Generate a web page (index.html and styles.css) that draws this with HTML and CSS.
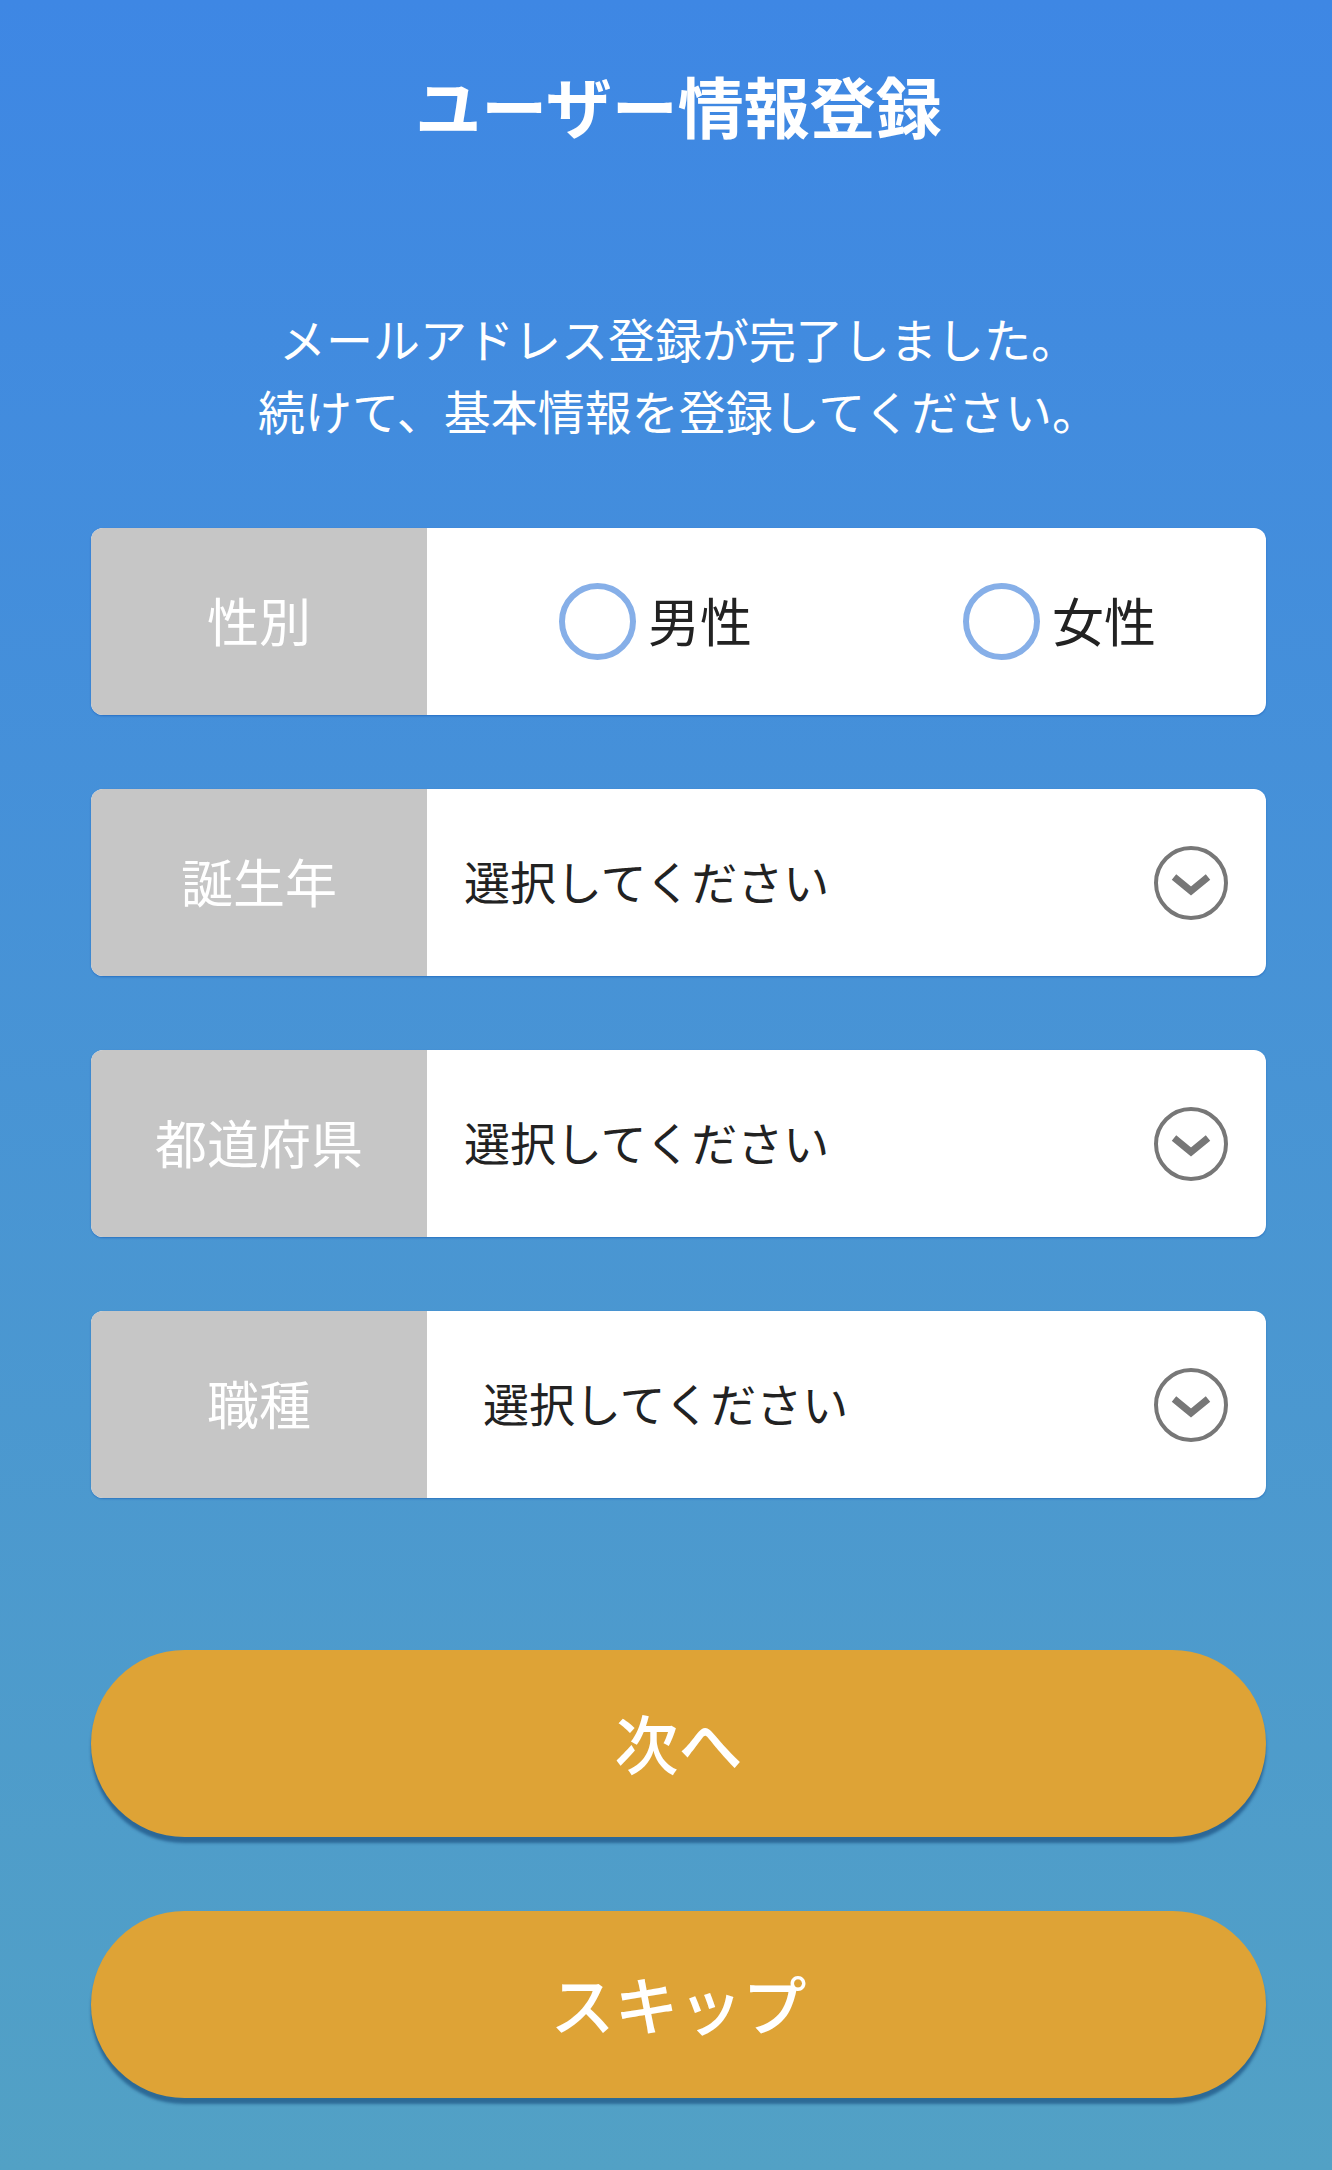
FILE: index.html
```html
<!DOCTYPE html>
<html lang="ja">
<head>
    <meta charset="UTF-8">
    <meta name="viewport" content="width=device-width, initial-scale=1.0">
    <title>ユーザー情報登録</title>

    <link rel="stylesheet" href="styles.css">
</head>
<body>

    <main class="page">
        <h1 class="title">ユーザー情報登録</h1>

        <p class="lead">
            メールアドレス登録が完了しました。<br>
            続けて、基本情報を登録してください。
        </p>

        <div class="field">
            <div class="field-label">性別</div>
            <div class="field-body radios">
                <label class="radio"><span class="radio-mark"></span>男性</label>
                <label class="radio"><span class="radio-mark"></span>女性</label>
            </div>
        </div>

        <div class="field">
            <div class="field-label">誕生年</div>
            <div class="field-body select">
                <span class="select-text">選択してください</span>
                <svg class="select-icon" width="76" height="76" viewBox="0 0 76 76">
                    <circle cx="38" cy="38" r="35" fill="none" stroke="#777" stroke-width="4"/>
                    <polyline points="21,32 38,46 55,32" fill="none" stroke="#777" stroke-width="7"/>
                </svg>
            </div>
        </div>

        <div class="field">
            <div class="field-label">都道府県</div>
            <div class="field-body select">
                <span class="select-text">選択してください</span>
                <svg class="select-icon" width="76" height="76" viewBox="0 0 76 76">
                    <circle cx="38" cy="38" r="35" fill="none" stroke="#777" stroke-width="4"/>
                    <polyline points="21,32 38,46 55,32" fill="none" stroke="#777" stroke-width="7"/>
                </svg>
            </div>
        </div>

        <div class="field">
            <div class="field-label">職種</div>
            <div class="field-body select select-wide">
                <span class="select-text">選択してください</span>
                <svg class="select-icon" width="76" height="76" viewBox="0 0 76 76">
                    <circle cx="38" cy="38" r="35" fill="none" stroke="#777" stroke-width="4"/>
                    <polyline points="21,32 38,46 55,32" fill="none" stroke="#777" stroke-width="7"/>
                </svg>
            </div>
        </div>

        <div class="actions">
            <button class="btn" type="button">次へ</button>
            <button class="btn" type="button">スキップ</button>
        </div>
    </main>

</body>
</html>
```

FILE: styles.css
```css
* {
    margin: 0;
    padding: 0;
    box-sizing: border-box;
}

body {
    min-height: 2170px;
    background: linear-gradient(to bottom, #3e87e4, #52a1c5);
    font-family: "Noto Sans CJK JP", "Noto Sans", sans-serif;
    color: #222;
}

.page {
    padding: 64px 66px 0 91px;
}

.title {
    color: white;
    text-align: center;
    font-size: 66px;
    font-weight: 600;
    line-height: 80px;
}

.lead {
    margin-top: 158px;
    color: white;
    text-align: center;
    font-size: 47px;
    line-height: 72px;
}

.field {
    display: flex;
    height: 187px;
    margin-top: 74px;
    border-radius: 12px;
    overflow: hidden;
    background-color: white;
    box-shadow: 0 1px 2px rgba(0, 70, 170, 0.45);
}

.lead + .field {
    margin-top: 82px;
}

.field-label {
    width: 336px;
    flex-shrink: 0;
    display: flex;
    align-items: center;
    justify-content: center;
    padding-bottom: 5px;
    background-color: #c6c6c6;
    color: white;
    font-size: 52px;
}

.field-body {
    flex: 1;
    display: flex;
    align-items: center;
}

.radios {
    padding-left: 132px;
    padding-bottom: 4px;
    gap: 211px;
}

.radio {
    display: flex;
    align-items: center;
    gap: 12px;
    font-size: 52px;
}

.radio-mark {
    width: 77px;
    height: 77px;
    margin-top: 4px;
    border: 6px solid #86afe8;
    border-radius: 50%;
}

.select {
    justify-content: space-between;
    padding: 0 37px 0 37px;
    font-size: 46px;
}

.select-text {
    margin-bottom: 6px;
}

.select-wide {
    padding-left: 56px;
}

.select-icon {
    display: block;
}

.actions {
    margin-top: 152px;
}

.btn {
    display: block;
    width: 100%;
    height: 187px;
    margin-bottom: 74px;
    padding-bottom: 6px;
    border: none;
    border-radius: 94px;
    background-color: #dea336;
    color: white;
    font-family: inherit;
    font-size: 64px;
    font-weight: 500;
    box-shadow: 0 6px 3px rgba(0, 40, 90, 0.45);
}
```
